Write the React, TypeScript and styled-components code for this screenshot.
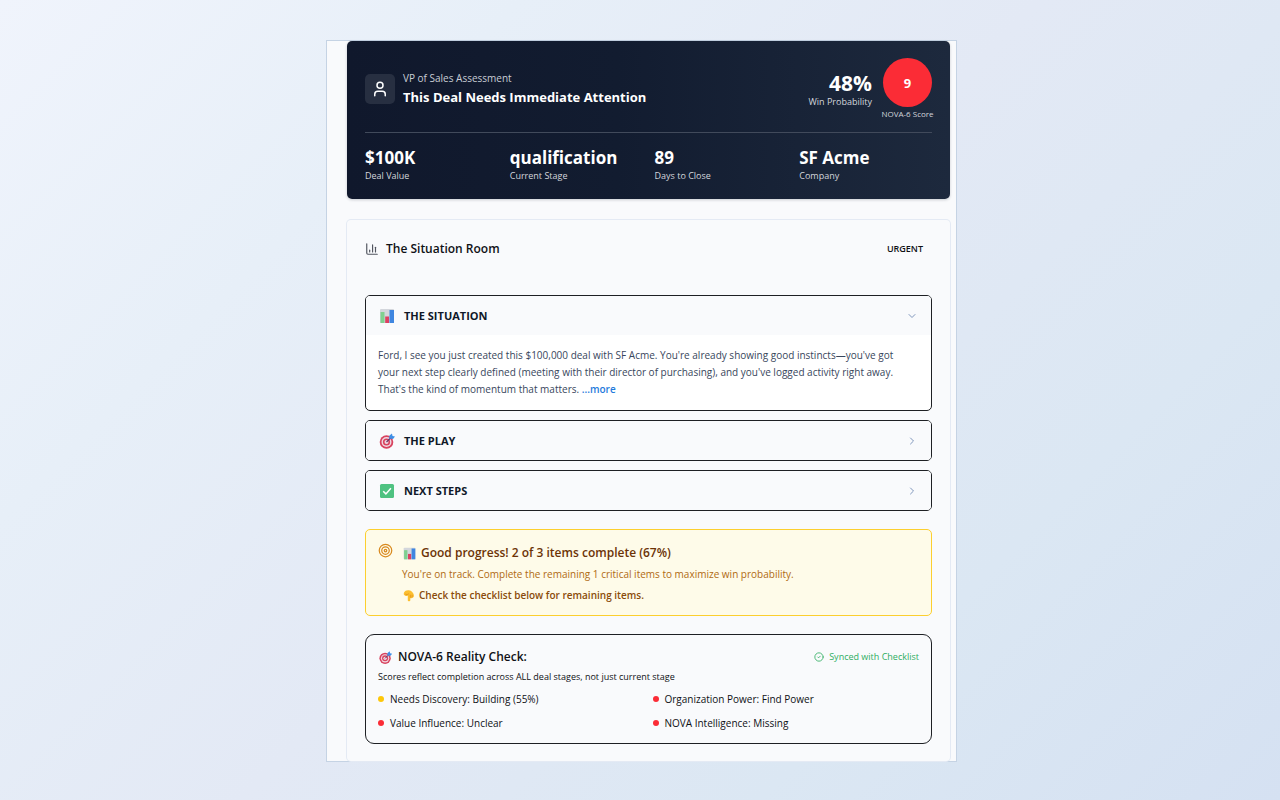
import React, { useState } from "react";
import styled, { createGlobalStyle } from "styled-components";
import { User, ChevronDown, ChevronRight, Target, CircleCheck, ChartColumn } from "lucide-react";

const Global = createGlobalStyle`
  * { box-sizing: border-box; }
  body {
    margin: 0;
    font-family: "Open Sans", "Noto Sans", sans-serif;
    color: #0f1115;
    background: #e2e9f5;
  }
  h1, h2, h3, p, ul { margin: 0; padding: 0; }
`;

const Page = styled.main`
  min-height: 100vh;
  padding: 40px 20px 38px 23px;
  background: linear-gradient(135deg, #f0f4fc 0%, #e7eff8 25%, #e3e9f5 50%, #dbe7f3 75%, #d5e1f2 100%);
`;

const Frame = styled.div`
  width: 100%;
  max-width: 631px;
  margin: 0 auto;
  padding: 0 6px 0 20px;
  border: 1px solid #c5d3e4;
  background: #f9fafc;
`;

const Hero = styled.header`
  padding: 17px 18px;
  border-radius: 5px;
  color: #fff;
  background: linear-gradient(90deg, #10182c 0%, #121c30 45%, #1d293d 100%);
  box-shadow: 0 1px 3px rgba(15, 23, 42, 0.2);
`;

const HeroTop = styled.div`
  display: flex;
  align-items: center;
  gap: 8px;
  padding-bottom: 12px;
  border-bottom: 1px solid #414a5b;
`;

const Avatar = styled.div`
  display: flex;
  align-items: center;
  justify-content: center;
  width: 30px;
  height: 30px;
  border-radius: 5px;
  background: #272f41;
`;

const HeroText = styled.div`
  flex: 1;
  padding-bottom: 2px;
`;

const Eyebrow = styled.p`
  font-size: 10px;
  line-height: 17px;
  color: #c9cdd5;
`;

const HeroTitle = styled.h1`
  font-size: 13px;
  line-height: 20px;
  font-weight: 700;
`;

const Probability = styled.div`
  text-align: right;
  margin-right: 3px;
`;

const BigNumber = styled.div`
  font-size: 21px;
  line-height: 24px;
  font-weight: 700;
`;

const Caption = styled.div`
  font-size: 9px;
  line-height: 13px;
  color: #d3d6dc;
`;

const Score = styled.div`
  display: flex;
  flex-direction: column;
  align-items: center;
  gap: 1px;
  width: 49px;
`;

const ScoreCircle = styled.div`
  display: flex;
  align-items: center;
  justify-content: center;
  width: 49px;
  height: 49px;
  border-radius: 50%;
  background: #fb2c36;
  font-size: 13px;
  font-weight: 700;
`;

const ScoreLabel = styled.div`
  font-size: 8px;
  line-height: 12px;
  white-space: nowrap;
  color: #d3d6dc;
`;

const Stats = styled.div`
  display: grid;
  grid-template-columns: repeat(4, 1fr);
  gap: 12px;
  padding-top: 14px;
`;

const StatValue = styled.div`
  font-size: 17px;
  line-height: 22px;
  font-weight: 700;
`;

const Card = styled.section`
  display: flex;
  flex-direction: column;
  gap: 18px;
  margin-top: 21px;
  padding: 18px 18px 17px;
  border-radius: 4px;
  box-shadow: 0 0 0 1px #e4eaf4;
`;

const CardHead = styled.div`
  display: flex;
  align-items: center;
  gap: 7px;
  height: 22px;
  margin-bottom: 17px;
`;

const CardTitle = styled.h2`
  flex: 1;
  font-size: 12px;
  line-height: 22px;
  font-weight: 600;
`;

const Urgent = styled.span`
  padding: 0 9px;
  font-size: 9px;
  line-height: 12px;
  font-weight: 600;
`;

const Accordion = styled.div`
  display: flex;
  flex-direction: column;
  gap: 9px;
`;

const Panel = styled.div`
  overflow: hidden;
  border: 1px solid #1e2024;
  border-radius: 5px;
  background: #fff;
`;

const PanelButton = styled.button`
  display: flex;
  align-items: center;
  gap: 8px;
  width: 100%;
  height: 39px;
  padding: 0 13px 0 12px;
  border: 0;
  background: #f9fafc;
  color: #101828;
  font: 700 11px/16px "Open Sans", "Noto Sans", sans-serif;
  text-align: left;
  cursor: pointer;
`;

const PanelLabel = styled.span`
  flex: 1;
`;

const PanelBody = styled.p`
  padding: 12px 28px 12px 12px;
  font-size: 10px;
  line-height: 17px;
  color: #38465c;
`;

const More = styled.a`
  color: #1f7bdc;
  font-weight: 600;
  text-decoration: none;
`;

const Notice = styled.div`
  display: flex;
  gap: 9px;
  padding: 13px 12px 11px;
  border: 1px solid #fccf2f;
  border-radius: 5px;
  background: #fefbe9;
`;

const NoticeTitle = styled.h3`
  display: flex;
  align-items: center;
  gap: 4px;
  font-size: 12px;
  line-height: 20px;
  font-weight: 600;
  color: #6c3306;
`;

const NoticeText = styled.p`
  font-size: 10px;
  line-height: 23px;
  color: #b06a12;
`;

const NoticeHint = styled.p`
  display: flex;
  align-items: center;
  gap: 4px;
  font-size: 10px;
  line-height: 18px;
  font-weight: 600;
  color: #8a4b0a;
`;

const Reality = styled.div`
  padding: 12px;
  border: 1px solid #1e2024;
  border-radius: 9px;
`;

const RealityHead = styled.div`
  display: flex;
  align-items: center;
  gap: 5px;
`;

const RealityTitle = styled.h3`
  flex: 1;
  font-size: 12px;
  line-height: 20px;
  font-weight: 600;
`;

const Synced = styled.span`
  display: flex;
  align-items: center;
  gap: 5px;
  font-size: 9px;
  line-height: 16px;
  color: #2fae62;
`;

const RealityNote = styled.p`
  font-size: 9px;
  line-height: 20px;
`;

const Checks = styled.ul`
  display: grid;
  grid-template-columns: 1fr 1fr;
  gap: 8px;
  padding-top: 4px;
  list-style: none;
`;

const Check = styled.li<{ $color: string }>`
  display: flex;
  align-items: center;
  gap: 6px;
  font-size: 10px;
  line-height: 16px;

  &::before {
    content: "";
    width: 6px;
    height: 6px;
    border-radius: 50%;
    background: ${(p) => p.$color};
  }
`;

const ChartEmoji = ({ size }: { size: number }) => (
  <svg width={size} height={size} viewBox="0 0 18 18" aria-hidden="true">
    <rect x="2" y="2" width="14" height="14" rx="1" fill="#d3d6dc" />
    <rect x="2.5" y="5" width="4" height="11" fill="#7fd08f" />
    <rect x="7.200" y="9.500" width="3.800" height="6.500" fill="#dd4062" />
    <rect x="11.500" y="3" width="4.500" height="13" fill="#3f86e0" />
  </svg>
);

const TargetEmoji = ({ size }: { size: number }) => (
  <svg width={size} height={size} viewBox="0 0 18 18" aria-hidden="true">
    <circle cx="8.500" cy="10" r="6.800" fill="#d8435f" />
    <circle cx="8.500" cy="10" r="5" fill="#f0d9e2" />
    <circle cx="8.500" cy="10" r="3.600" fill="#d8435f" />
    <circle cx="8.500" cy="10" r="2" fill="#f0d9e2" />
    <path d="M8.500 10 13 5.500" stroke="#6a3a66" strokeWidth="1.200" />
    <path d="M11 6.500 11.500 3.500 14 1.500 14.500 4 17 4.500 15 7Z" fill="#3f8fe6" />
  </svg>
);

const CheckEmoji = ({ size }: { size: number }) => (
  <svg width={size} height={size} viewBox="0 0 18 18" aria-hidden="true">
    <rect x="2" y="2" width="14" height="14" rx="1.500" fill="#4fc281" />
    <path d="m5.200 9.200 2.700 2.700 5-5.600" fill="none" stroke="#fff" strokeWidth="1.500" />
  </svg>
);

const PointEmoji = ({ size }: { size: number }) => (
  <svg width={size} height={size} viewBox="0 0 18 18" aria-hidden="true">
    <path
      d="M5 2.500C6.500 1.500 11 1.500 13 3c2 1.500 3.500 3.500 3.500 6.500 0 1.800-1 2.800-2.500 2.500-.8 1-1.700 1-2.500.6V15.500c0 2-3.500 2-3.500 0V9.500C5.500 10 3 9 2.500 7.500 2 5.500 3.500 3.500 5 2.500Z"
      fill="#fcbf30"
    />
    <path d="M4.500 7c1.500 1 3.500.8 5-.5M11.500 12V8M14 11.700V8" stroke="#dd8d1c" strokeWidth="1" fill="none" />
  </svg>
);

const stats = [
  ["$100K", "Deal Value"],
  ["qualification", "Current Stage"],
  ["89", "Days to Close"],
  ["SF Acme", "Company"],
];

const checks = [
  ["Needs Discovery: Building (55%)", "#fdc70a"],
  ["Organization Power: Find Power", "#fb2c36"],
  ["Value Influence: Unclear", "#fb2c36"],
  ["NOVA Intelligence: Missing", "#fb2c36"],
];

type SectionProps = {
  icon: React.ReactNode;
  label: string;
  defaultOpen?: boolean;
  children?: React.ReactNode;
};

function Section({ icon, label, defaultOpen = false, children }: SectionProps) {
  const [open, setOpen] = useState(defaultOpen);
  const Chevron = open ? ChevronDown : ChevronRight;
  return (
    <Panel>
      <PanelButton type="button" aria-expanded={open} onClick={() => setOpen(!open)}>
        {icon}
        <PanelLabel>{label}</PanelLabel>
        <Chevron size={12} color="#7f96bc" />
      </PanelButton>
      {open && children}
    </Panel>
  );
}

export default function App() {
  return (
    <>
      <Global />
      <Page>
        <Frame>
          <Hero>
            <HeroTop>
              <Avatar>
                <User size={18} color="#fff" />
              </Avatar>
              <HeroText>
                <Eyebrow>VP of Sales Assessment</Eyebrow>
                <HeroTitle>This Deal Needs Immediate Attention</HeroTitle>
              </HeroText>
              <Probability>
                <BigNumber>48%</BigNumber>
                <Caption>Win Probability</Caption>
              </Probability>
              <Score>
                <ScoreCircle>9</ScoreCircle>
                <ScoreLabel>NOVA-6 Score</ScoreLabel>
              </Score>
            </HeroTop>
            <Stats>
              {stats.map(([value, label]) => (
                <div key={label}>
                  <StatValue>{value}</StatValue>
                  <Caption>{label}</Caption>
                </div>
              ))}
            </Stats>
          </Hero>

          <Card>
            <CardHead>
              <ChartColumn size={14} color="#52555f" />
              <CardTitle>The Situation Room</CardTitle>
              <Urgent>URGENT</Urgent>
            </CardHead>

            <Accordion>
              <Section icon={<ChartEmoji size={18} />} label="THE SITUATION" defaultOpen>
                <PanelBody>
                  Ford, I see you just created this $100,000 deal with SF Acme. You're already showing good
                  instincts—you've got your next step clearly defined (meeting with their director of
                  purchasing), and you've logged activity right away. That's the kind of momentum that
                  matters. <More href="#more">...more</More>
                </PanelBody>
              </Section>
              <Section icon={<TargetEmoji size={18} />} label="THE PLAY" />
              <Section icon={<CheckEmoji size={18} />} label="NEXT STEPS" />
            </Accordion>

            <Notice>
              <Target size={15} color="#d98a1f" />
              <div>
                <NoticeTitle>
                  <ChartEmoji size={15} />
                  Good progress! 2 of 3 items complete (67%)
                </NoticeTitle>
                <NoticeText>
                  You're on track. Complete the remaining 1 critical items to maximize win probability.
                </NoticeText>
                <NoticeHint>
                  <PointEmoji size={13} />
                  Check the checklist below for remaining items.
                </NoticeHint>
              </div>
            </Notice>

            <Reality>
              <RealityHead>
                <TargetEmoji size={15} />
                <RealityTitle>NOVA-6 Reality Check:</RealityTitle>
                <Synced>
                  <CircleCheck size={10} />
                  Synced with Checklist
                </Synced>
              </RealityHead>
              <RealityNote>Scores reflect completion across ALL deal stages, not just current stage</RealityNote>
              <Checks>
                {checks.map(([label, color]) => (
                  <Check key={label} $color={color}>
                    {label}
                  </Check>
                ))}
              </Checks>
            </Reality>
          </Card>
        </Frame>
      </Page>
    </>
  );
}
